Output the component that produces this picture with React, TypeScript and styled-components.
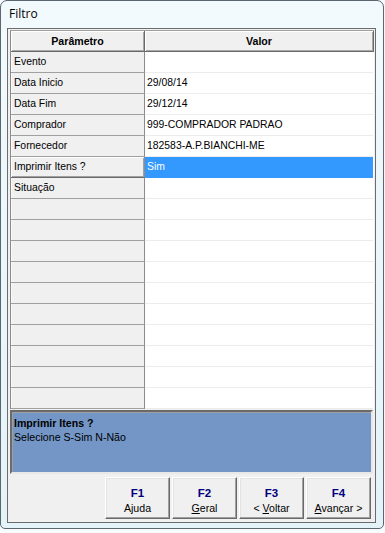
import React from "react";
import styled, { createGlobalStyle } from "styled-components";

const Global = createGlobalStyle`
  html, body { margin: 0; padding: 0; background: #f7fbfd; }
  body { font-family: "Liberation Sans", Arial, sans-serif; }
`;

const Frame = styled.div`
  box-sizing: border-box;
  width: 384px;
  height: 529px;
  border: 1px solid #5b6770;
  border-radius: 7px 7px 5px 5px;
  background: linear-gradient(#f2fafd, #e4f3f9);
  padding: 0 7px 5px 6px;
  display: flex;
  flex-direction: column;
`;

const TitleBar = styled.div`
  height: 27px;
  box-sizing: border-box;
  padding: 5px 0 0 2px;
  font-family: "Open Sans", "Noto Sans", sans-serif;
  font-size: 12px;
  line-height: 16px;
  color: #000;
`;

const Client = styled.div`
  flex: 1;
  box-sizing: border-box;
  border: 1px solid #6c6c6c;
  background: #f0f0f0;
  padding: 1px 1px 1px 1px;
  display: flex;
  flex-direction: column;
  font-size: 10.4px;
  color: #000;
`;

const Grid = styled.div`
  margin: 0 0 1px 1px;
  border-top: 1px solid #a0a0a0;
  border-left: 1px solid #8a8a8a;
  background: #fff;
  display: flex;
  flex-direction: column;
`;

const Row = styled.div`
  display: grid;
  grid-template-columns: 134px 1fr;
  height: 21px;
`;

const HeaderRow = styled(Row)`
  height: 21px;
`;

const HeaderCell = styled.div`
  box-sizing: border-box;
  background: #f0f0f0;
  border-right: 1px solid #696969;
  border-bottom: 1px solid #696969;
  box-shadow: inset 1px 1px #fff, inset -1px -1px #a8a8a8;
  font-weight: bold;
  text-align: center;
  line-height: 20px;
  font-size: 10.6px;
`;

const FixedCell = styled.div<{ $active?: boolean }>`
  box-sizing: border-box;
  background: #f0f0f0;
  border-right: 1px solid #8c8c8c;
  border-bottom: 1px solid ${(p) => (p.$active ? "#696969" : "#a0a0a0")};
  box-shadow: ${(p) =>
    p.$active ? "inset 1px 1px #fff, inset -1px -1px #a0a0a0" : "inset 1px 0 #fafafa"};
  padding-left: 3px;
  line-height: 20px;
  white-space: nowrap;
`;

const ValueCell = styled.div<{ $selected?: boolean }>`
  box-sizing: border-box;
  background: ${(p) => (p.$selected ? "#3399ff" : "#fff")};
  color: ${(p) => (p.$selected ? "#fff" : "#000")};
  border-bottom: 1px solid ${(p) => (p.$selected ? "#3399ff" : "#ececec")};
  margin-right: 1px;
  padding-left: 2px;
  line-height: 20px;
  white-space: nowrap;
`;

const HintPanel = styled.div`
  box-sizing: border-box;
  margin-left: 1px;
  margin-right: 1px;
  height: 64px;
  background: #7396c6;
  border: 2px solid;
  border-color: #6a6a6a #e8e8e8 #e8e8e8 #6a6a6a;
  box-shadow: inset 1px 1px #a0a0a0;
  padding: 4px 0 0 2px;
  line-height: 14px;
  font-size: 10.6px;
`;

const HintTitle = styled.div`
  font-weight: bold;
`;

const ButtonBar = styled.div`
  display: flex;
  justify-content: flex-end;
  gap: 2px;
  padding: 3px 3px 0 0;
`;

const FButton = styled.div`
  box-sizing: border-box;
  width: 65px;
  height: 42px;
  background: #f0f0f0;
  border: 1px solid;
  border-color: #ffffff #696969 #696969 #ffffff;
  box-shadow: inset -1px -1px #a0a0a0, inset 1px 1px #e3e3e3;
  display: flex;
  flex-direction: column;
  align-items: center;
  padding-top: 8px;
  font-size: 10.6px;
`;

const FKey = styled.div`
  font-weight: bold;
  color: #000080;
  font-size: 11.5px;
  line-height: 14px;
`;

const FLabel = styled.div`
  line-height: 16px;
  color: #000;
  white-space: nowrap;
  & u { text-decoration-thickness: 1px; text-underline-offset: 1px; }
`;

const rows: { p: string; v: string; sel?: boolean }[] = [
  { p: "Evento", v: "" },
  { p: "Data Inicio", v: "29/08/14" },
  { p: "Data Fim", v: "29/12/14" },
  { p: "Comprador", v: "999-COMPRADOR PADRAO" },
  { p: "Fornecedor", v: "182583-A.P.BIANCHI-ME" },
  { p: "Imprimir Itens ?", v: "Sim", sel: true },
  { p: "Situação", v: "" },
  ...Array.from({ length: 10 }, () => ({ p: "", v: "" })),
];

export default function App() {
  return (
    <>
      <Global />
      <Frame>
        <TitleBar>Filtro</TitleBar>
        <Client>
          <Grid>
            <HeaderRow>
              <HeaderCell>Parâmetro</HeaderCell>
              <HeaderCell>Valor</HeaderCell>
            </HeaderRow>
            {rows.map((r, i) => (
              <Row key={i}>
                <FixedCell $active={r.sel}>{r.p}</FixedCell>
                <ValueCell $selected={r.sel}>{r.v}</ValueCell>
              </Row>
            ))}
          </Grid>
          <HintPanel>
            <HintTitle>Imprimir Itens ?</HintTitle>
            <div>Selecione S-Sim N-Não</div>
          </HintPanel>
          <ButtonBar>
            <FButton>
              <FKey>F1</FKey>
              <FLabel>Ajuda</FLabel>
            </FButton>
            <FButton>
              <FKey>F2</FKey>
              <FLabel>
                <u>G</u>eral
              </FLabel>
            </FButton>
            <FButton>
              <FKey>F3</FKey>
              <FLabel>
                &lt; <u>V</u>oltar
              </FLabel>
            </FButton>
            <FButton>
              <FKey>F4</FKey>
              <FLabel>
                <u>A</u>vançar &gt;
              </FLabel>
            </FButton>
          </ButtonBar>
        </Client>
      </Frame>
    </>
  );
}
